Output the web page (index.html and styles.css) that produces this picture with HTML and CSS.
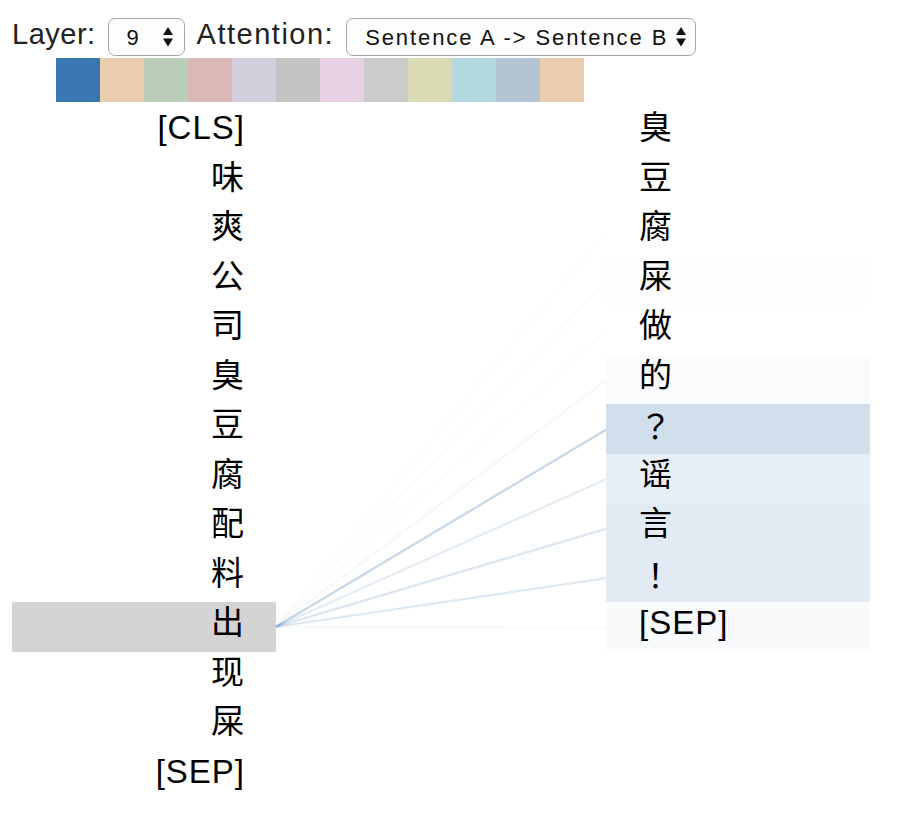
FILE: index.html
```html
<!DOCTYPE html>
<html lang="zh">
<head>
    <meta charset="UTF-8">
    <meta name="viewport" content="width=device-width, initial-scale=1.0">
    <title>Attention</title>
    <link rel="stylesheet" href="styles.css">
</head>
<body>
    <div class="page">
        <div class="controls">
            <span class="label">Layer:</span>
            <span class="select-wrap layer-select">
                <select id="layer">
                    <option>9</option>
                </select>
                <svg class="arrows" width="10" height="20" viewBox="0 0 10 20"><path d="M0 8 L5 0 L10 8 Z M0 11.5 L5 19.5 L10 11.5 Z"/></svg>
            </span>
            <span class="label att-label">Attention:</span>
            <span class="select-wrap att-select">
                <select id="att">
                    <option>Sentence A -&gt; Sentence B</option>
                </select>
                <svg class="arrows" width="10" height="20" viewBox="0 0 10 20"><path d="M0 8 L5 0 L10 8 Z M0 11.5 L5 19.5 L10 11.5 Z"/></svg>
            </span>
        </div>

        <div class="heads">
            <span class="head h0"></span>
            <span class="head h1"></span>
            <span class="head h2"></span>
            <span class="head h3"></span>
            <span class="head h4"></span>
            <span class="head h5"></span>
            <span class="head h6"></span>
            <span class="head h7"></span>
            <span class="head h8"></span>
            <span class="head h9"></span>
            <span class="head h10"></span>
            <span class="head h11"></span>
        </div>

        <div class="viz">
            <div class="tokens left">
                <div class="token">[CLS]</div>
                <div class="token">味</div>
                <div class="token">爽</div>
                <div class="token">公</div>
                <div class="token">司</div>
                <div class="token">臭</div>
                <div class="token">豆</div>
                <div class="token">腐</div>
                <div class="token">配</div>
                <div class="token">料</div>
                <div class="token selected">出</div>
                <div class="token">现</div>
                <div class="token">屎</div>
                <div class="token">[SEP]</div>
            </div>

            <svg class="links" width="330" height="693" viewBox="0 0 330 693">
                <g stroke="rgb(58,118,176)" stroke-width="2.2" fill="none">
                    <line x1="0" y1="519.75" x2="330" y2="124.75" stroke-opacity="0.025"/>
                    <line x1="0" y1="519.75" x2="330" y2="174.25" stroke-opacity="0.03"/>
                    <line x1="0" y1="519.75" x2="330" y2="223.75" stroke-opacity="0.025"/>
                    <line x1="0" y1="519.75" x2="330" y2="273.25" stroke-opacity="0.05"/>
                    <line x1="0" y1="519.75" x2="330" y2="322.75" stroke-opacity="0.3"/>
                    <line x1="0" y1="519.75" x2="330" y2="372.25" stroke-opacity="0.14"/>
                    <line x1="0" y1="519.75" x2="330" y2="421.75" stroke-opacity="0.18"/>
                    <line x1="0" y1="519.75" x2="330" y2="471.25" stroke-opacity="0.17"/>
                    <line x1="0" y1="519.75" x2="330" y2="520.75" stroke-opacity="0.04"/>
                </g>
            </svg>

            <div class="tokens right">
                <div class="token">臭</div>
                <div class="token">豆</div>
                <div class="token">腐</div>
                <div class="token" style="background: rgba(58,118,176,0.012)">屎</div>
                <div class="token">做</div>
                <div class="token" style="background: rgba(58,118,176,0.03)">的</div>
                <div class="token punct" style="background: rgba(58,118,176,0.23)">？</div>
                <div class="token" style="background: rgba(58,118,176,0.115)">谣</div>
                <div class="token" style="background: rgba(58,118,176,0.15)">言</div>
                <div class="token punct" style="background: rgba(58,118,176,0.15)">！</div>
                <div class="token" style="background: rgba(58,118,176,0.035)">[SEP]</div>
            </div>
        </div>
    </div>
</body>
</html>
```

FILE: styles.css
```css
body {
    margin: 0;
    background: #fff;
    color: #000;
    font-family: 'Liberation Sans', 'Noto Sans CJK SC', sans-serif;
}
.page {
    padding: 18px 0 0 12px;
}
.controls {
    display: flex;
    align-items: flex-start;
    height: 38px;
}
.label {
    font-size: 29px;
    line-height: 32px;
    letter-spacing: 0.5px;
    color: #222;
}
.att-label {
    letter-spacing: 1.5px;
}
.select-wrap {
    position: relative;
    display: block;
    margin: 0 12px;
}
.select-wrap select {
    appearance: none;
    -webkit-appearance: none;
    display: block;
    height: 38px;
    border: 1.5px solid #a6a6a6;
    border-radius: 7px;
    background: #fdfdfd;
    color: #111;
    font-family: 'Liberation Sans', sans-serif;
    font-size: 22px;
    letter-spacing: 1.9px;
    padding: 0 0 0 18px;
    margin: 0;
}
.layer-select select {
    width: 77px;
}
.att-select select {
    width: 350px;
}
.arrows {
    position: absolute;
    top: 9px;
    right: 12px;
    fill: #111;
    pointer-events: none;
}
.att-select .arrows {
    right: 10px;
}
.heads {
    display: flex;
    margin: 2px 0 0 44px;
}
.head {
    width: 44px;
    height: 44px;
}
.h0 { background: #3a76b0; }
.h1 { background: #eacdaf; }
.h2 { background: #bacdb7; }
.h3 { background: #d9b8b6; }
.h4 { background: #d3cedb; }
.h5 { background: #c3c3c3; }
.h6 { background: #e6d0e2; }
.h7 { background: #cbcbcb; }
.h8 { background: #dadab5; }
.h9 { background: #b4dadf; }
.h10 { background: #b3c5d3; }
.h11 { background: #eacdaf; }
.viz {
    display: flex;
    margin-top: 5px;
}
.tokens {
    width: 264px;
    display: flex;
    flex-direction: column;
}
.token {
    height: 49.5px;
    box-sizing: border-box;
    padding-top: 1px;
    font-size: 33px;
    line-height: 40px;
    letter-spacing: 1px;
    white-space: nowrap;
}
.token.punct {
    font-family: 'Noto Sans CJK TC', sans-serif;
}
.left .token {
    text-align: right;
    padding-right: 31px;
}
.right .token {
    padding-left: 33px;
}
.token.selected {
    background: #d3d3d3;
}
.links {
    display: block;
    flex: none;
}
```
